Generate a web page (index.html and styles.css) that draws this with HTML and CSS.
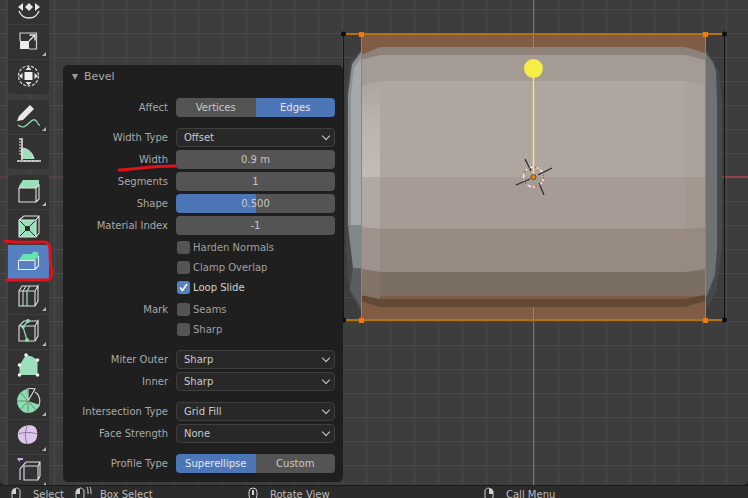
FILE: index.html
```html
<!DOCTYPE html>
<html lang="en">
<head>
    <meta charset="UTF-8">
    <meta name="viewport" content="width=device-width, initial-scale=1.0">
    <title>Bevel</title>
    <link rel="stylesheet" href="styles.css">
</head>
<body>
    <svg width="0" height="0" class="defs">
        <linearGradient id="left-strip" x1="0" y1="0" x2="0" y2="1">
            <stop offset="0" stop-color="#aea49f"/>
            <stop offset=".45" stop-color="#bdb3ae"/>
            <stop offset="1" stop-color="#c4bab6"/>
        </linearGradient>
        <symbol id="i-rotate" viewBox="-2 -2 28 28">
            <path d="M12 8l4 4-4 4-4-4z" fill="#e6e6e6"/>
            <path d="M1 12l5-4v8zM23 12l-5-4v8z" fill="#e6e6e6"/>
            <path d="M2 16c2 5 6 7 10 7s8-2 10-7" fill="none" stroke="#e6e6e6" stroke-width="1.3"/>
        </symbol>
        <symbol id="i-scale" viewBox="-2 -2 28 28">
            <path d="M3 11V3h16.500v16H12" fill="none" stroke="#cfcfcf" stroke-width="1.2"/>
            <rect x="3" y="11" width="9" height="8" fill="#ededed"/>
            <path d="M12 11l5.500-5.500M12.500 5h5.500v5.500" fill="none" stroke="#e6e6e6" stroke-width="1.4"/>
        </symbol>
        <symbol id="i-transform" viewBox="-2 -2 28 28">
            <circle cx="11.500" cy="11" r="10" fill="none" stroke="#dcdcdc" stroke-width="1.2" stroke-dasharray="3 1.500"/>
            <rect x="7.500" y="7" width="8" height="8" fill="#efefef"/>
            <path d="M11.500 1.500l3 3.500h-6zM11.500 20.500l3-3.500h-6zM2 11l3.500-3v6zM21 11l-3.500-3v6z" fill="#e6e6e6"/>
        </symbol>
        <symbol id="i-annotate" viewBox="-2 -2 28 28">
            <path d="M0 16l2-5L13 0l4 4L6 15z" fill="#e8e8e8"/>
            <path d="M1 20c5 4 8 1 11-2s6-5 8-1 2 3 3 3" fill="none" stroke="#8fd9b0" stroke-width="1.3"/>
        </symbol>
        <symbol id="i-measure" viewBox="-2 -2 28 28">
            <path d="M4 19V8c7 0 12 5 13 11z" fill="#9be0bb"/>
            <path d="M2 -1h3v21M0 21h24" fill="none" stroke="#dedede" stroke-width="1.6"/>
            <path d="M2 2h2M2 5h2M2 8h2M2 11h2M2 14h2M8 20v2M12 20v2M16 20v2M20 20v2" stroke="#dedede" stroke-width="1"/>
            <path d="M4 8c7 0 12 5 13 11" fill="none" stroke="#e0e0e0" stroke-width="1"/>
        </symbol>
        <symbol id="i-extrude" viewBox="-2 -2 28 28">
            <path d="M2 6l4-6h16v5l-3 3H2z" fill="#9be0bb"/>
            <path d="M2 8h17v14H2zM19 8l3-3v14l-3 3" fill="none" stroke="#e2e2e2" stroke-width="1.1"/>
        </symbol>
        <symbol id="i-inset" viewBox="-2 -2 28 28">
            <path d="M2 5h17v17H2z" fill="#9be0bb"/>
            <path d="M8 11h5v5H8z" fill="#2e2e2e"/>
            <path d="M2 5l6 6M19 5l-6 6M2 22l6-6M19 22l-6-6" stroke="#2e2e2e" stroke-width="1"/>
            <path d="M2 5h17v17H2zM2 5l5-4h15v17l-3 4M19 5l3-4" fill="none" stroke="#e2e2e2" stroke-width="1.1"/>
        </symbol>
        <symbol id="i-bevel" viewBox="-2 -2 28 28">
            <path d="M1.500 10.500L6 4H14L17 1.500 21 2 21.500 6 18 10.500z" fill="#62e4ab"/>
            <path d="M1.500 10.500V19.500H18L21.500 16V6M18 10.500V19.500M1.500 10.500H18" fill="none" stroke="#e4ecf4" stroke-width="1.1"/>
        </symbol>
        <symbol id="i-loop" viewBox="-2 -2 28 28">
            <path d="M2 6h16v15H2zM18 6l3-5v15l-3 5M2 6l3-5h16" fill="none" stroke="#dedede" stroke-width="1.1"/>
            <path d="M6 21V6M6 6l3-5" fill="none" stroke="#dedede" stroke-width="1"/>
            <path d="M10 21V6l3-5" fill="none" stroke="#8fd9b0" stroke-width="1.3"/>
        </symbol>
        <symbol id="i-knife" viewBox="-2 -2 28 28">
            <path d="M2 6h16v15H2zM18 6l3-5v15l-3 5M2 6l5-5h14" fill="none" stroke="#dedede" stroke-width="1.1"/>
            <path d="M11 1L6 7l4 13" fill="none" stroke="#8fd9b0" stroke-width="1.3"/>
            <circle cx="11" cy="1" r="2" fill="#8fd9b0"/>
            <circle cx="6" cy="7" r="1.800" fill="#8fd9b0"/>
            <circle cx="10" cy="20" r="2" fill="#8fd9b0"/>
        </symbol>
        <symbol id="i-poly" viewBox="-2 -2 28 28">
            <path d="M2.500 10L9 0 15 1.500 20.500 5V20H2.500z" fill="#9be0bb"/>
            <circle cx="9" cy="0" r="1.800" fill="#f2f2f2"/>
            <circle cx="20.500" cy="5" r="1.800" fill="#f2f2f2"/>
            <circle cx="2.500" cy="10" r="1.800" fill="#f2f2f2"/>
            <circle cx="2.500" cy="20" r="1.800" fill="#f2f2f2"/>
            <circle cx="20.500" cy="20" r="1.800" fill="#f2f2f2"/>
        </symbol>
        <symbol id="i-spin" viewBox="-2 -2 28 28">
            <g transform="translate(0 -1)">
                <path d="M11 12L10 0C5 1 0 6 0 12s5 12 11 12 11-5 12-8z" fill="#8fdcb0"/>
                <path d="M11 12L11 -1l7 1-7 12M18 3c4 2 6 8 4 13" fill="none" stroke="#dedede" stroke-width="1.1"/>
                <path d="M11 12L3 3M11 12H0M11 12L3 21M11 12v12M11 12l8 9" stroke="#5d8f74" stroke-width="1"/>
            </g>
        </symbol>
        <symbol id="i-smooth" viewBox="-2 -2 28 28">
            <path d="M3 4c3-4 12-5 15-2 3 3 3 11 0 14-4 4-12 4-15 0-3-3-3-9 0-12z" fill="#dcc6ea"/>
            <path d="M1.500 9c5-2 13-2 19 0M10 1c-2 5-2 13 0 18" fill="none" stroke="#8b7b97" stroke-width="1"/>
        </symbol>
        <symbol id="i-shear" viewBox="-2 -2 28 28">
            <path d="M0 -1l3-3v2h3v2H3v2z" fill="#cfa8e6"/>
            <path d="M3 20V9l6-7" fill="none" stroke="#d8c4e6" stroke-width="1.200"/>
            <path d="M7 20V6h14v14zM21 6l2-4H9M23 2v14l-2 4" fill="none" stroke="#dedede" stroke-width="1.100"/>
        </symbol>
    </svg>

    <main class="viewport">
        <!-- mesh in the 3d view -->
        <svg class="scene" width="748" height="486" viewBox="0 0 748 486">
            <line x1="0" y1="177" x2="343" y2="177" stroke="#6f3d46" stroke-width="1"/>
            <line x1="722" y1="177" x2="748" y2="177" stroke="#96424f" stroke-width="2"/>
            <line x1="343.500" y1="34" x2="343.500" y2="320" stroke="#141414"/>
            <line x1="724.500" y1="34" x2="724.500" y2="320" stroke="#141414"/>
            <line x1="533.500" y1="0" x2="533.500" y2="486" stroke="#4c7fb8"/>

            <!-- silhouette and side faces -->
            <path d="M361 50L350 62 346 90V250L349 290 361 312H705L716 292 722 250V100L719 72 707 51z" fill="#47484a"/>
            <path d="M705 52L713 62 716 72 717 100V250L715 275 705 300z" fill="#6f7275"/>
            <path d="M361 52L352 64 348 95V225H361z" fill="#8d9092"/>
            <path d="M361 58L354 68 351 95V225H361z" fill="#a5a9a9"/>
            <path d="M348 225H361V268H353z" fill="#82878a"/>
            <path d="M353 268H361V308L350 290z" fill="#5b5d5e"/>

            <!-- orange selection strip behind the faces -->
            <rect x="361" y="34" width="344" height="24" fill="#7f5c43"/>
            <rect x="361" y="292" width="344" height="28" fill="#7f5c43"/>
            <line x1="533.500" y1="34" x2="533.500" y2="47" stroke="#8f7d9b"/>
            <line x1="533.500" y1="307" x2="533.500" y2="320" stroke="#8f7d9b"/>

            <!-- front faces, top to bottom -->
            <path d="M361 55L380 47H685L705 53V90H361z" fill="#8e817a"/>
            <path d="M361 60L380 55H685L705 60V90H361z" fill="#a59b95"/>
            <path d="M361 86L380 81H685L705 86V190H361z" fill="#afa69f"/>
            <rect x="361" y="177" width="344" height="54" fill="#a69c95"/>
            <path d="M361 227L380 229H685L705 227V272H361z" fill="#968a83"/>
            <path d="M361 269L380 272H685L705 269V296H361z" fill="#7b6e62"/>
            <path d="M361 295L380 299H685L705 295V301L685 307H380L361 301z" fill="#614936"/>

            <!-- left and right strips of the front faces -->
            <path d="M361 86L380 81V177H361z" fill="url(#left-strip)"/>
            <path d="M361 177H380V229L361 227z" fill="#b2a8a3"/>
            <path d="M361 227L380 229V272L361 269z" fill="#9e938c"/>
            <path d="M361 269L380 272V299L361 295z" fill="#827468"/>
            <path d="M685 81L705 86V177H685z" fill="#aba29c"/>
            <path d="M685 177H705V227L685 229z" fill="#a2988f"/>

            <!-- selection -->
            <path d="M343 34H724M343 320H724" stroke="#b5700f" stroke-width="2"/>
            <path d="M361.500 34V320M705.500 34V320" stroke="#c07a22" stroke-width="1"/>
            <rect x="359" y="32" width="5" height="5" fill="#f07a10"/>
            <rect x="703" y="32" width="5" height="5" fill="#f07a10"/>
            <rect x="359" y="318" width="5" height="5" fill="#f07a10"/>
            <rect x="703" y="318" width="5" height="5" fill="#f07a10"/>
            <circle cx="343.500" cy="34" r="2.500" fill="#0d0d0d"/>
            <circle cx="724.500" cy="34" r="2.500" fill="#0d0d0d"/>
            <circle cx="343.500" cy="320" r="2.500" fill="#0d0d0d"/>
            <circle cx="724.500" cy="320" r="2.500" fill="#0d0d0d"/>

            <!-- yellow light and gizmo -->
            <line x1="533.500" y1="70" x2="533.500" y2="177" stroke="#efe57a" stroke-width="1.500"/>
            <circle cx="533.500" cy="68.500" r="9.500" fill="#f6ee44"/>
            <circle cx="533.500" cy="177" r="10" fill="none" stroke="#f4f0ee" stroke-width="1.500" stroke-dasharray="4 2"/>
            <circle cx="533.500" cy="177" r="10" fill="none" stroke="#d9414a" stroke-width="1.500" stroke-dasharray="2 10"/>
            <path d="M525 159L531 171M552 168L538 175M516 185L530 179M539 183L544 195" stroke="#2a2a2a" stroke-width="1.200"/>
            <circle cx="533.500" cy="177" r="2.500" fill="#f0860f" stroke="#5a4a30" stroke-width="1"/>
        </svg>

        <nav class="toolbar">
            <div class="tool-group tool-group-first">
                <div class="tool"><svg class="icon"><use href="#i-rotate"/></svg></div>
                <div class="tool more"><svg class="icon"><use href="#i-scale"/></svg></div>
                <div class="tool"><svg class="icon"><use href="#i-transform"/></svg></div>
            </div>
            <div class="tool-group">
                <div class="tool more"><svg class="icon"><use href="#i-annotate"/></svg></div>
                <div class="tool"><svg class="icon"><use href="#i-measure"/></svg></div>
            </div>
            <div class="tool-group">
                <div class="tool more"><svg class="icon"><use href="#i-extrude"/></svg></div>
                <div class="tool"><svg class="icon"><use href="#i-inset"/></svg></div>
                <div class="tool tool-active"><svg class="icon"><use href="#i-bevel"/></svg></div>
                <div class="tool more"><svg class="icon"><use href="#i-loop"/></svg></div>
                <div class="tool more"><svg class="icon"><use href="#i-knife"/></svg></div>
                <div class="tool"><svg class="icon"><use href="#i-poly"/></svg></div>
                <div class="tool more"><svg class="icon"><use href="#i-spin"/></svg></div>
                <div class="tool more"><svg class="icon"><use href="#i-smooth"/></svg></div>
                <div class="tool more"><svg class="icon"><use href="#i-shear"/></svg></div>
            </div>
        </nav>

        <section class="panel">
            <h2 class="panel-title"><span class="arrow"></span>Bevel</h2>

            <div class="row">
                <span class="label">Affect</span>
                <div class="segmented"><span>Vertices</span><span class="on">Edges</span></div>
            </div>

            <div class="row gap">
                <span class="label">Width Type</span>
                <div class="select">Offset</div>
            </div>
            <div class="row">
                <span class="label">Width</span>
                <div class="field">0.9 m</div>
            </div>
            <div class="row">
                <span class="label">Segments</span>
                <div class="field">1</div>
            </div>
            <div class="row">
                <span class="label">Shape</span>
                <div class="field field-slider">0.500</div>
            </div>
            <div class="row">
                <span class="label">Material Index</span>
                <div class="field">-1</div>
            </div>

            <div class="row">
                <span class="label"></span>
                <div class="check"><span class="box"></span>Harden Normals</div>
            </div>
            <div class="row tight">
                <span class="label"></span>
                <div class="check"><span class="box"></span>Clamp Overlap</div>
            </div>
            <div class="row tight">
                <span class="label"></span>
                <div class="check check-on"><span class="box">
                    <svg width="13" height="13" viewBox="0 0 13 13"><path d="M3 6.500l2.500 3L10 3" fill="none" stroke="#fff" stroke-width="1.600"/></svg>
                </span>Loop Slide</div>
            </div>
            <div class="row">
                <span class="label">Mark</span>
                <div class="check"><span class="box"></span>Seams</div>
            </div>
            <div class="row tight">
                <span class="label"></span>
                <div class="check"><span class="box"></span>Sharp</div>
            </div>

            <div class="row gap">
                <span class="label">Miter Outer</span>
                <div class="select">Sharp</div>
            </div>
            <div class="row">
                <span class="label">Inner</span>
                <div class="select">Sharp</div>
            </div>

            <div class="row gap">
                <span class="label">Intersection Type</span>
                <div class="select">Grid Fill</div>
            </div>
            <div class="row">
                <span class="label">Face Strength</span>
                <div class="select">None</div>
            </div>

            <div class="row gap">
                <span class="label">Profile Type</span>
                <div class="segmented"><span class="on">Superellipse</span><span>Custom</span></div>
            </div>
        </section>

        <!-- red marker drawn on top of the screenshot -->
        <svg class="marker" width="748" height="486" viewBox="0 0 748 486">
            <path d="M119 170C135 169 155 166 175 166" fill="none" stroke="#e0121c" stroke-width="3" stroke-linecap="round"/>
            <path d="M5 241C20 243 35 242 45 242 49 243 50 246 50 250 50 258 50 266 52 272 52 278 50 280 44 280 30 280 18 280 7 280" fill="none" stroke="#e0121c" stroke-width="3" stroke-linecap="round"/>
        </svg>
    </main>

    <footer class="statusbar">
        <div class="status-item status-select">
            <svg width="10" height="14" viewBox="0 0 10 14"><path d="M1 4c0-2 2-3 4-3h0v6H1z" fill="#d0d0d0"/><path d="M5 1c2 0 4 1 4 3v6c0 2-2 3-4 3s-4-1-4-3V4" fill="none" stroke="#d0d0d0"/></svg>
            Select
        </div>
        <div class="status-item status-box">
            <svg width="17" height="14" viewBox="0 0 17 14"><path d="M1 4c0-2 2-3 4-3h0v6H1z" fill="#d0d0d0"/><path d="M5 1c2 0 4 1 4 3v6c0 2-2 3-4 3s-4-1-4-3V4M12 0c1 2 1 4 1 7M15 0c1 2 1 4 1 7" fill="none" stroke="#d0d0d0"/></svg>
            Box Select
        </div>
        <div class="status-item status-rotate">
            <svg width="10" height="14" viewBox="0 0 10 14"><rect x="1" y="1" width="8" height="12" rx="4" fill="none" stroke="#d0d0d0"/><rect x="4" y="3" width="2" height="5" fill="#d0d0d0"/></svg>
            Rotate View
        </div>
        <div class="status-item status-menu">
            <svg width="10" height="14" viewBox="0 0 10 14"><path d="M5 1h0c2 0 4 1 4 3v3H5z" fill="#d0d0d0"/><path d="M5 1c-2 0-4 1-4 3v6c0 2 2 3 4 3s4-1 4-3V4" fill="none" stroke="#d0d0d0"/></svg>
            Call Menu
        </div>
    </footer>
</body>
</html>
```

FILE: styles.css
```css
* {
    box-sizing: border-box;
}
html, body {
    margin: 0;
    padding: 0;
    width: 748px;
    height: 498px;
    overflow: hidden;
}
body {
    font-family: "DejaVu Sans", "Noto Sans", sans-serif;
    font-size: 10px;
    color: #c8c8c8;
    background-color: #232323;
}
.defs {
    position: absolute;
}

.viewport {
    position: relative;
    height: 485px;
    overflow: hidden;
    border-radius: 0 0 5px 5px;
    background-color: #3d3d3d;
    background-image:
        linear-gradient(#4a4a4a 1px, transparent 1px),
        linear-gradient(90deg, #4a4a4a 1px, transparent 1px);
    background-size: 24px 24px;
    background-position: 6px 9px;
}
.scene, .marker {
    position: absolute;
    left: 0;
    top: 0;
}
.marker {
    pointer-events: none;
}

.toolbar {
    position: absolute;
    left: 8px;
    top: 0;
    width: 41px;
    display: flex;
    flex-direction: column;
    gap: 6px;
}
.tool-group {
    display: flex;
    flex-direction: column;
    gap: 1px;
    border-radius: 4px;
    overflow: hidden;
}
.tool-group-first {
    margin-top: -10px;
}
.tool {
    position: relative;
    height: 34px;
    display: flex;
    align-items: center;
    justify-content: center;
    background-color: #323232;
}
.tool-active {
    background-color: #5680c2;
}
.tool.more::after {
    content: "";
    position: absolute;
    right: 3px;
    bottom: 3px;
    border-style: solid;
    border-width: 0 0 4px 4px;
    border-color: transparent transparent #b4b4b4 transparent;
}
.icon {
    width: 28px;
    height: 28px;
    overflow: visible;
}

.panel {
    position: absolute;
    left: 63px;
    top: 65px;
    width: 280px;
    height: 417px;
    padding-right: 8px;
    border-radius: 5px;
    background-color: #1f1f1f;
}
.panel-title {
    margin: 0;
    height: 32px;
    padding: 5px 0 0 9px;
    display: flex;
    align-items: flex-start;
    gap: 6px;
    font-size: 11px;
    line-height: 14px;
    font-weight: normal;
    color: #a8a8a8;
}
.arrow {
    width: 0;
    height: 0;
    margin-top: 4px;
    border-style: solid;
    border-width: 6px 3.500px 0 3.500px;
    border-color: #9a9a9a transparent transparent transparent;
}

.row {
    display: grid;
    grid-template-columns: 105px 159px;
    column-gap: 8px;
    height: 20px;
    margin-top: 2px;
    align-items: center;
}
.panel-title + .row {
    margin-top: 0;
}
.row.gap {
    margin-top: 10px;
}
.row.tight {
    margin-top: 0;
}
.label {
    text-align: right;
    color: #a9a9a9;
}

.segmented {
    display: flex;
    height: 19px;
    border-radius: 4px;
    overflow: hidden;
}
.segmented span {
    flex: 1;
    line-height: 19px;
    text-align: center;
    background-color: #545454;
}
.segmented .on {
    background-color: #4d76b8;
    color: #e6e6e6;
}
.select {
    position: relative;
    height: 19px;
    line-height: 17px;
    padding-left: 7px;
    border: 1px solid #3e3e3e;
    border-radius: 4px;
    background-color: #282828;
}
.select::after {
    content: "";
    position: absolute;
    right: 5px;
    top: 4px;
    width: 5px;
    height: 5px;
    border-right: 1px solid #cfcfcf;
    border-bottom: 1px solid #cfcfcf;
    transform: rotate(45deg);
}
.field {
    height: 19px;
    line-height: 19px;
    text-align: center;
    border-radius: 4px;
    background-color: #545454;
}
.field-slider {
    background-image: linear-gradient(90deg, #4d76b8 50%, transparent 50%);
}
.check {
    display: flex;
    align-items: center;
    gap: 3px;
    padding-left: 1px;
    color: #a0a0a0;
}
.check-on {
    color: #d2d2d2;
}
.box {
    width: 13px;
    height: 13px;
    border-radius: 3px;
    background-color: #545454;
    display: flex;
}
.check-on .box {
    background-color: #5680c2;
}

.statusbar {
    position: relative;
    height: 13px;
    border-top: 1px solid #1a1a1a;
    background-color: #2b2b2b;
    overflow: hidden;
}
.status-item {
    position: absolute;
    top: 1px;
    display: flex;
    align-items: flex-start;
    gap: 12px;
    line-height: 16px;
    color: #bdbdbd;
}
.status-select {
    left: 11px;
}
.status-box {
    left: 75px;
    gap: 8px;
}
.status-rotate {
    left: 248px;
}
.status-menu {
    left: 484px;
}
```
